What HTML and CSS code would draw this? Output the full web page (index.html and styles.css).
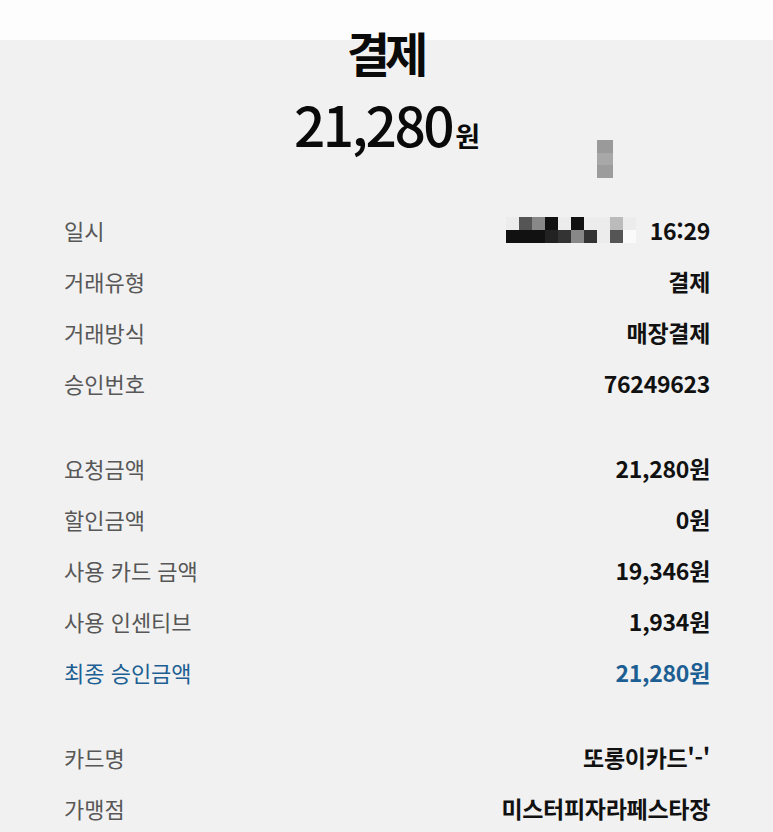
FILE: index.html
```html
<!DOCTYPE html>
<html lang="ko">
<head>
<meta charset="utf-8">
<title>결제</title>
<link rel="stylesheet" href="styles.css">
</head>
<body>
<div class="page">
  <header class="head">
    <h1 class="title">결제</h1>
    <div class="total"><span class="num">21,280</span><span class="won">원</span></div>
    <div class="censor-bar"></div>
  </header>

  <section class="group">
    <div class="row">
      <span class="label">일시</span>
      <span class="value date">
        <span class="mosaic">
          <i class="c1"></i><i class="c4"></i><i class="c6"></i><i class="c9"></i><i class="c1"></i><i class="c9"></i><i class="c1"></i><i class="c1"></i><i class="c7"></i><i class="c1"></i>
          <i class="c9"></i><i class="c9"></i><i class="c9"></i><i class="c8"></i><i class="c5"></i><i class="c6"></i><i class="c5"></i><i class="c1"></i><i class="c4"></i><i class="c0"></i>
        </span>
        <span>16:29</span>
      </span>
    </div>
    <div class="row"><span class="label">거래유형</span><span class="value">결제</span></div>
    <div class="row"><span class="label">거래방식</span><span class="value">매장결제</span></div>
    <div class="row"><span class="label">승인번호</span><span class="value">76249623</span></div>
  </section>

  <section class="group">
    <div class="row"><span class="label">요청금액</span><span class="value">21,280원</span></div>
    <div class="row"><span class="label">할인금액</span><span class="value">0원</span></div>
    <div class="row"><span class="label">사용 카드 금액</span><span class="value">19,346원</span></div>
    <div class="row"><span class="label">사용 인센티브</span><span class="value">1,934원</span></div>
    <div class="row final"><span class="label">최종 승인금액</span><span class="value">21,280원</span></div>
  </section>

  <section class="group">
    <div class="row"><span class="label">카드명</span><span class="value">또롱이카드'-'</span></div>
    <div class="row"><span class="label">가맹점</span><span class="value">미스터피자라페스타장</span></div>
  </section>
</div>
</body>
</html>
```

FILE: styles.css
```css
html, body {
  margin: 0;
  padding: 0;
}
body {
  background: linear-gradient(to bottom, #fdfdfd 0, #fdfdfd 40px, #f1f1f1 40px, #f1f1f1 100%);
  font-family: "Noto Sans CJK KR", "Noto Sans", sans-serif;
  color: #111;
  min-height: 832px;
}
.page {
  padding: 0 63px 0 64px;
}
.head {
  position: relative;
  display: flex;
  flex-direction: column;
  align-items: center;
  padding-top: 22px;
  height: 204px;
  box-sizing: border-box;
}
.title {
  margin: 0 0 0 -4px;
  font-size: 47px;
  line-height: 60px;
  font-weight: 700;
  letter-spacing: -5px;
  color: #0a0a0a;
}
.total {
  margin-top: 11px;
  line-height: 60px;
  font-weight: 500;
  color: #0a0a0a;
  display: flex;
  align-items: baseline;
}
.total .num {
  font-size: 55px;
  letter-spacing: -2.5px;
}
.total .won {
  font-size: 27px;
  margin-left: 3px;
  font-weight: 700;
}
.censor-bar {
  position: absolute;
  left: 533px;
  top: 140px;
  width: 16px;
  height: 38px;
  background: linear-gradient(to bottom, #9a9a9a 0, #9a9a9a 13px, #a8a8a8 13px, #a8a8a8 25px, #9c9c9c 25px);
}
.group {
  display: flex;
  flex-direction: column;
  margin-bottom: 34px;
}
.row {
  display: flex;
  justify-content: space-between;
  align-items: center;
  height: 51px;
}
.label {
  font-size: 22px;
  color: #575757;
}
.value {
  font-size: 23px;
  font-weight: 600;
  color: #111;
  letter-spacing: -0.3px;
}
.final .label,
.final .value {
  color: #1d5f93;
}
.date {
  display: flex;
  align-items: center;
  gap: 14px;
}
.mosaic {
  display: grid;
  grid-template-columns: repeat(10, 13px);
  grid-auto-rows: 13px;
}
.mosaic i { display: block; }
.c0 { background: #fafafa; }
.c1 { background: #ececec; }
.c4 { background: #555; }
.c5 { background: #333; }
.c6 { background: #888; }
.c7 { background: #bbb; }
.c8 { background: #222; }
.c9 { background: #111; }
```
